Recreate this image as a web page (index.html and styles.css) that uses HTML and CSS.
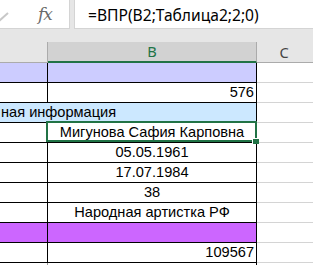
FILE: index.html
```html
<!DOCTYPE html>
<html lang="ru">
<head>
<meta charset="utf-8">
<title>ВПР</title>
<link rel="stylesheet" href="styles.css">
</head>
<body>
<div class="top">
    <div class="formula-bar">
        <div class="tools">
            <svg class="enter" width="10" height="28" viewBox="0 0 10 28"><path d="M-1 21 L8 13" /></svg>
            <span class="fx">fx</span>
        </div>
        <div class="formula">=ВПР(B2;Таблица2;2;0)</div>
    </div>
</div>
<div class="sheet">
    <div class="row head">
        <div class="hA"></div>
        <div class="hB">B</div>
        <div class="hC">C</div>
    </div>
    <div class="row lav">
        <div class="a"></div><div class="b"></div><div class="c"></div>
    </div>
    <div class="row">
        <div class="a"></div><div class="b num">576</div><div class="c"></div>
    </div>
    <div class="row info">
        <div class="ab">ная информация</div><div class="c"></div>
    </div>
    <div class="row">
        <div class="a"></div><div class="b sel">Мигунова Сафия Карповна</div><div class="c"></div>
    </div>
    <div class="row">
        <div class="a"></div><div class="b">05.05.1961</div><div class="c"></div>
    </div>
    <div class="row">
        <div class="a"></div><div class="b">17.07.1984</div><div class="c"></div>
    </div>
    <div class="row">
        <div class="a"></div><div class="b">38</div><div class="c"></div>
    </div>
    <div class="row">
        <div class="a"></div><div class="b">Народная артистка РФ</div><div class="c"></div>
    </div>
    <div class="row purple">
        <div class="a"></div><div class="b"></div><div class="c"></div>
    </div>
    <div class="row">
        <div class="a"></div><div class="b num">109567</div><div class="c"></div>
    </div>
    <div class="row last">
        <div class="a"></div><div class="b"></div><div class="c"></div>
    </div>
</div>
</body>
</html>
```

FILE: styles.css
```css
*{margin:0; padding:0; box-sizing:border-box;}
html,body{width:313px; height:265px; overflow:hidden; background:#fff;}
body{font-family:"Liberation Sans", Arial, sans-serif; font-size:14.6px; color:#000;}

.top{background:#e6e6e6; padding-bottom:13px;}
.formula-bar{display:flex; gap:4px; height:29px;}
.tools{width:70px; background:#fff; border:1px solid #d4d4d4; border-left:none; border-top:none; display:flex; align-items:center;}
.enter path{stroke:#c8c8c8; stroke-width:2; fill:none;}
.fx{margin-left:28px; font-family:"DejaVu Serif", "Liberation Serif", serif; font-style:italic; font-size:17px; color:#6a6a6a; letter-spacing:-1px; padding-bottom:1px;}
.formula{flex:1; background:#fff; border:1px solid #d4d4d4; border-right:none; border-top:none; padding:3px 0 0 13px; font-family:"Noto Sans", "Open Sans", sans-serif; font-size:15.6px; line-height:24px; color:#000; white-space:nowrap;}

.row{display:grid; grid-template-columns:48px 209px 1fr; height:20px; line-height:19px;}
.row > div{border-bottom:1px solid #000; white-space:nowrap; overflow:hidden;}
.row .a{border-right:1px solid #000;}
.row .b{border-right:1px solid #000; text-align:center;}
.row .b.num{text-align:right; padding-right:2px;}
.row .c{border-bottom-color:#d4d4d4;}
.row .ab{grid-column:1 / 3; border-right:1px solid #000; padding-left:1px;}

.head{height:21px; font-family:"Noto Sans", "Open Sans", sans-serif; font-size:14.6px; line-height:20px;}
.head > div{background:#e6e6e6;}
.head .hA{border-right:1px solid #ababab; border-bottom:1px solid #ababab;}
.head .hB{background:#d2d2d2; border-right:1px solid #ababab; border-bottom:2px solid #217346; color:#217346; text-align:center; line-height:19px;}
.head .hC{border-bottom:1px solid #ababab; color:#444; text-align:center; padding-right:2px;}

.lav .a,.lav .b{background:#ccccff;}
.info .ab{background:#cce8ff;}
.purple .a,.purple .b{background:#cc66ff;}
.last{height:3px;}
.last .a,.last .b{border-bottom:none;}
.last .a{border-right-color:#9a9a9a;}

.sel{position:relative; overflow:visible !important;}
.sel::after{content:""; position:absolute; left:-2px; top:-2px; right:-1px; bottom:0; border:2px solid #217346;}
.sel::before{content:""; position:absolute; right:-3px; bottom:-2px; width:6px; height:5px; background:#217346; border-left:1px solid #fff; border-top:1px solid #fff; z-index:1;}
```
